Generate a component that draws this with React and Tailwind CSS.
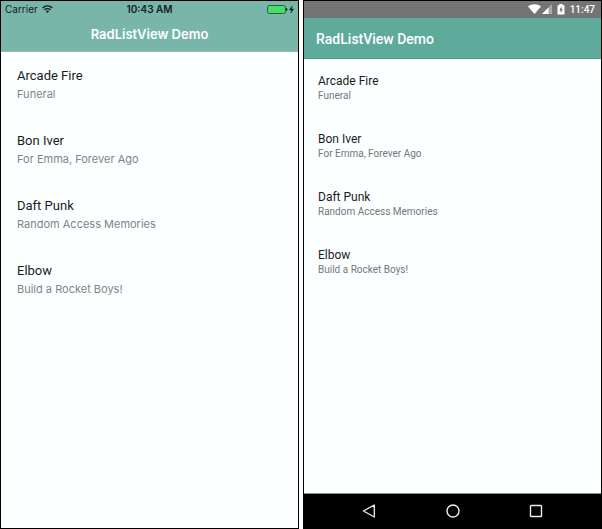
const albums = [
  { artist: 'Arcade Fire', title: 'Funeral' },
  { artist: 'Bon Iver', title: 'For Emma, Forever Ago' },
  { artist: 'Daft Punk', title: 'Random Access Memories' },
  { artist: 'Elbow', title: 'Build a Rocket Boys!' },
];

function IosWifi() {
  return (
    <svg width="11" height="8" viewBox="0 0 11 8" fill="none" stroke="#14201d" strokeWidth="1.4" aria-hidden="true">
      <path d="M0.7 3C3.4 0.2 7.6 0.2 10.3 3" />
      <path d="M2.5 4.9C4.2 3.2 6.8 3.2 8.5 4.9" />
      <path d="M5.5 7.9 3.9 6.2C4.8 5.4 6.2 5.4 7.1 6.2Z" fill="#14201d" stroke="none" />
    </svg>
  );
}

function IosBattery() {
  return (
    <svg width="27" height="9" viewBox="0 0 27 9" aria-hidden="true">
      <rect x="0.5" y="0.5" width="18" height="8" rx="1.8" fill="#46df62" stroke="#33594f" />
      <path d="M19.4 3Q21 4.5 19.4 6Z" fill="#14201d" stroke="#14201d" strokeWidth="0.6" />
      <path d="M25.3 0.8 22.3 5H24.4L23.7 8.2 26.8 3.9H24.7Z" fill="#14201d" stroke="#14201d" strokeWidth="0.3" />
    </svg>
  );
}

function AndroidStatusIcons() {
  return (
    <svg width="38" height="11" viewBox="0 0 38 11" aria-hidden="true">
      <path d="M0 2.6C3.5-0.5 9.5-0.5 13 2.6L6.5 10Z" fill="#fff" />
      <path d="M24 0V10H14Z" fill="#a8a8a8" />
      <path d="M20.5 3.5V10H14Z" fill="#fff" />
      <path d="M31.3 0H34.7V1.2H36.5V10.5H29.5V1.2H31.3Z" fill="#fff" />
      <path d="M33.5 2.5 31.3 6.2H32.7V9L34.8 5.2H33.5Z" fill="#666" />
    </svg>
  );
}

function IosPhone() {
  return (
    <section className="flex flex-1 flex-col border border-black bg-[#fbffff] font-['Inter',sans-serif]">
      <header className="border-b border-[#a0b5af] bg-[#77b6a8]">
        <div className="grid h-4 grid-cols-3 items-center px-1 text-[10px] leading-4 text-[#14201d]">
          <div className="flex items-center gap-1">
            <span>Carrier</span>
            <IosWifi />
          </div>
          <time className="text-center font-semibold">10:43 AM</time>
          <div className="flex justify-end">
            <IosBattery />
          </div>
        </div>
        <h1 className="h-[34px] text-center text-[13px] font-semibold leading-[34px] text-white">RadListView Demo</h1>
      </header>
      <ul className="px-4 pt-[14px]">
        {albums.map((album) => (
          <li key={album.artist} className="h-[65px]">
            <h2 className="font-['Roboto',sans-serif] text-[13px] leading-[19px] text-[#1b1c1c]">{album.artist}</h2>
            <p className="text-[11px] leading-[18px] text-[#818484]">{album.title}</p>
          </li>
        ))}
      </ul>
    </section>
  );
}

function AndroidPhone() {
  return (
    <section className="flex flex-1 flex-col border border-black bg-[#fbffff] font-['Roboto',sans-serif]">
      <header>
        <div className="flex h-[17px] items-center justify-end gap-1 bg-[#747474] pr-[6px] text-[10px] leading-[17px] text-white">
          <AndroidStatusIcons />
          <time className="font-medium">11:47</time>
        </div>
        <h1 className="h-[41px] border-b border-[#4e9788] bg-[#5eaa9b] pl-3 text-sm font-medium leading-[42px] text-white">
          RadListView Demo
        </h1>
      </header>
      <ul className="flex-1 px-[14px] pt-[14px]">
        {albums.map((album) => (
          <li key={album.artist} className="h-[58px]">
            <h2 className="text-[12px] leading-4 text-[#1b1c1c]">{album.artist}</h2>
            <p className="text-[10px] leading-[14px] text-[#747777]">{album.title}</p>
          </li>
        ))}
      </ul>
      <nav className="grid h-[35px] grid-cols-[1fr_36px_1fr] items-center border-t border-[#8b9090] bg-black">
        <button type="button" aria-label="Back" className="flex justify-center">
          <svg width="14" height="14" viewBox="0 0 14 14" fill="none" stroke="#eee" strokeWidth="1.3" strokeLinejoin="round">
            <path d="M1.4 7 12.3 1V13Z" />
          </svg>
        </button>
        <button type="button" aria-label="Home" className="flex justify-center">
          <svg width="14" height="14" viewBox="0 0 14 14" fill="none" stroke="#eee" strokeWidth="1.4">
            <circle cx="7" cy="7" r="6" />
          </svg>
        </button>
        <button type="button" aria-label="Overview" className="flex justify-center">
          <svg width="14" height="14" viewBox="0 0 14 14" fill="none" stroke="#eee" strokeWidth="1.4">
            <rect x="1.5" y="1.5" width="11" height="11" rx="0.8" />
          </svg>
        </button>
      </nav>
    </section>
  );
}

export default function App() {
  return (
    <main className="flex min-h-screen gap-1 bg-white">
      <IosPhone />
      <AndroidPhone />
    </main>
  );
}
